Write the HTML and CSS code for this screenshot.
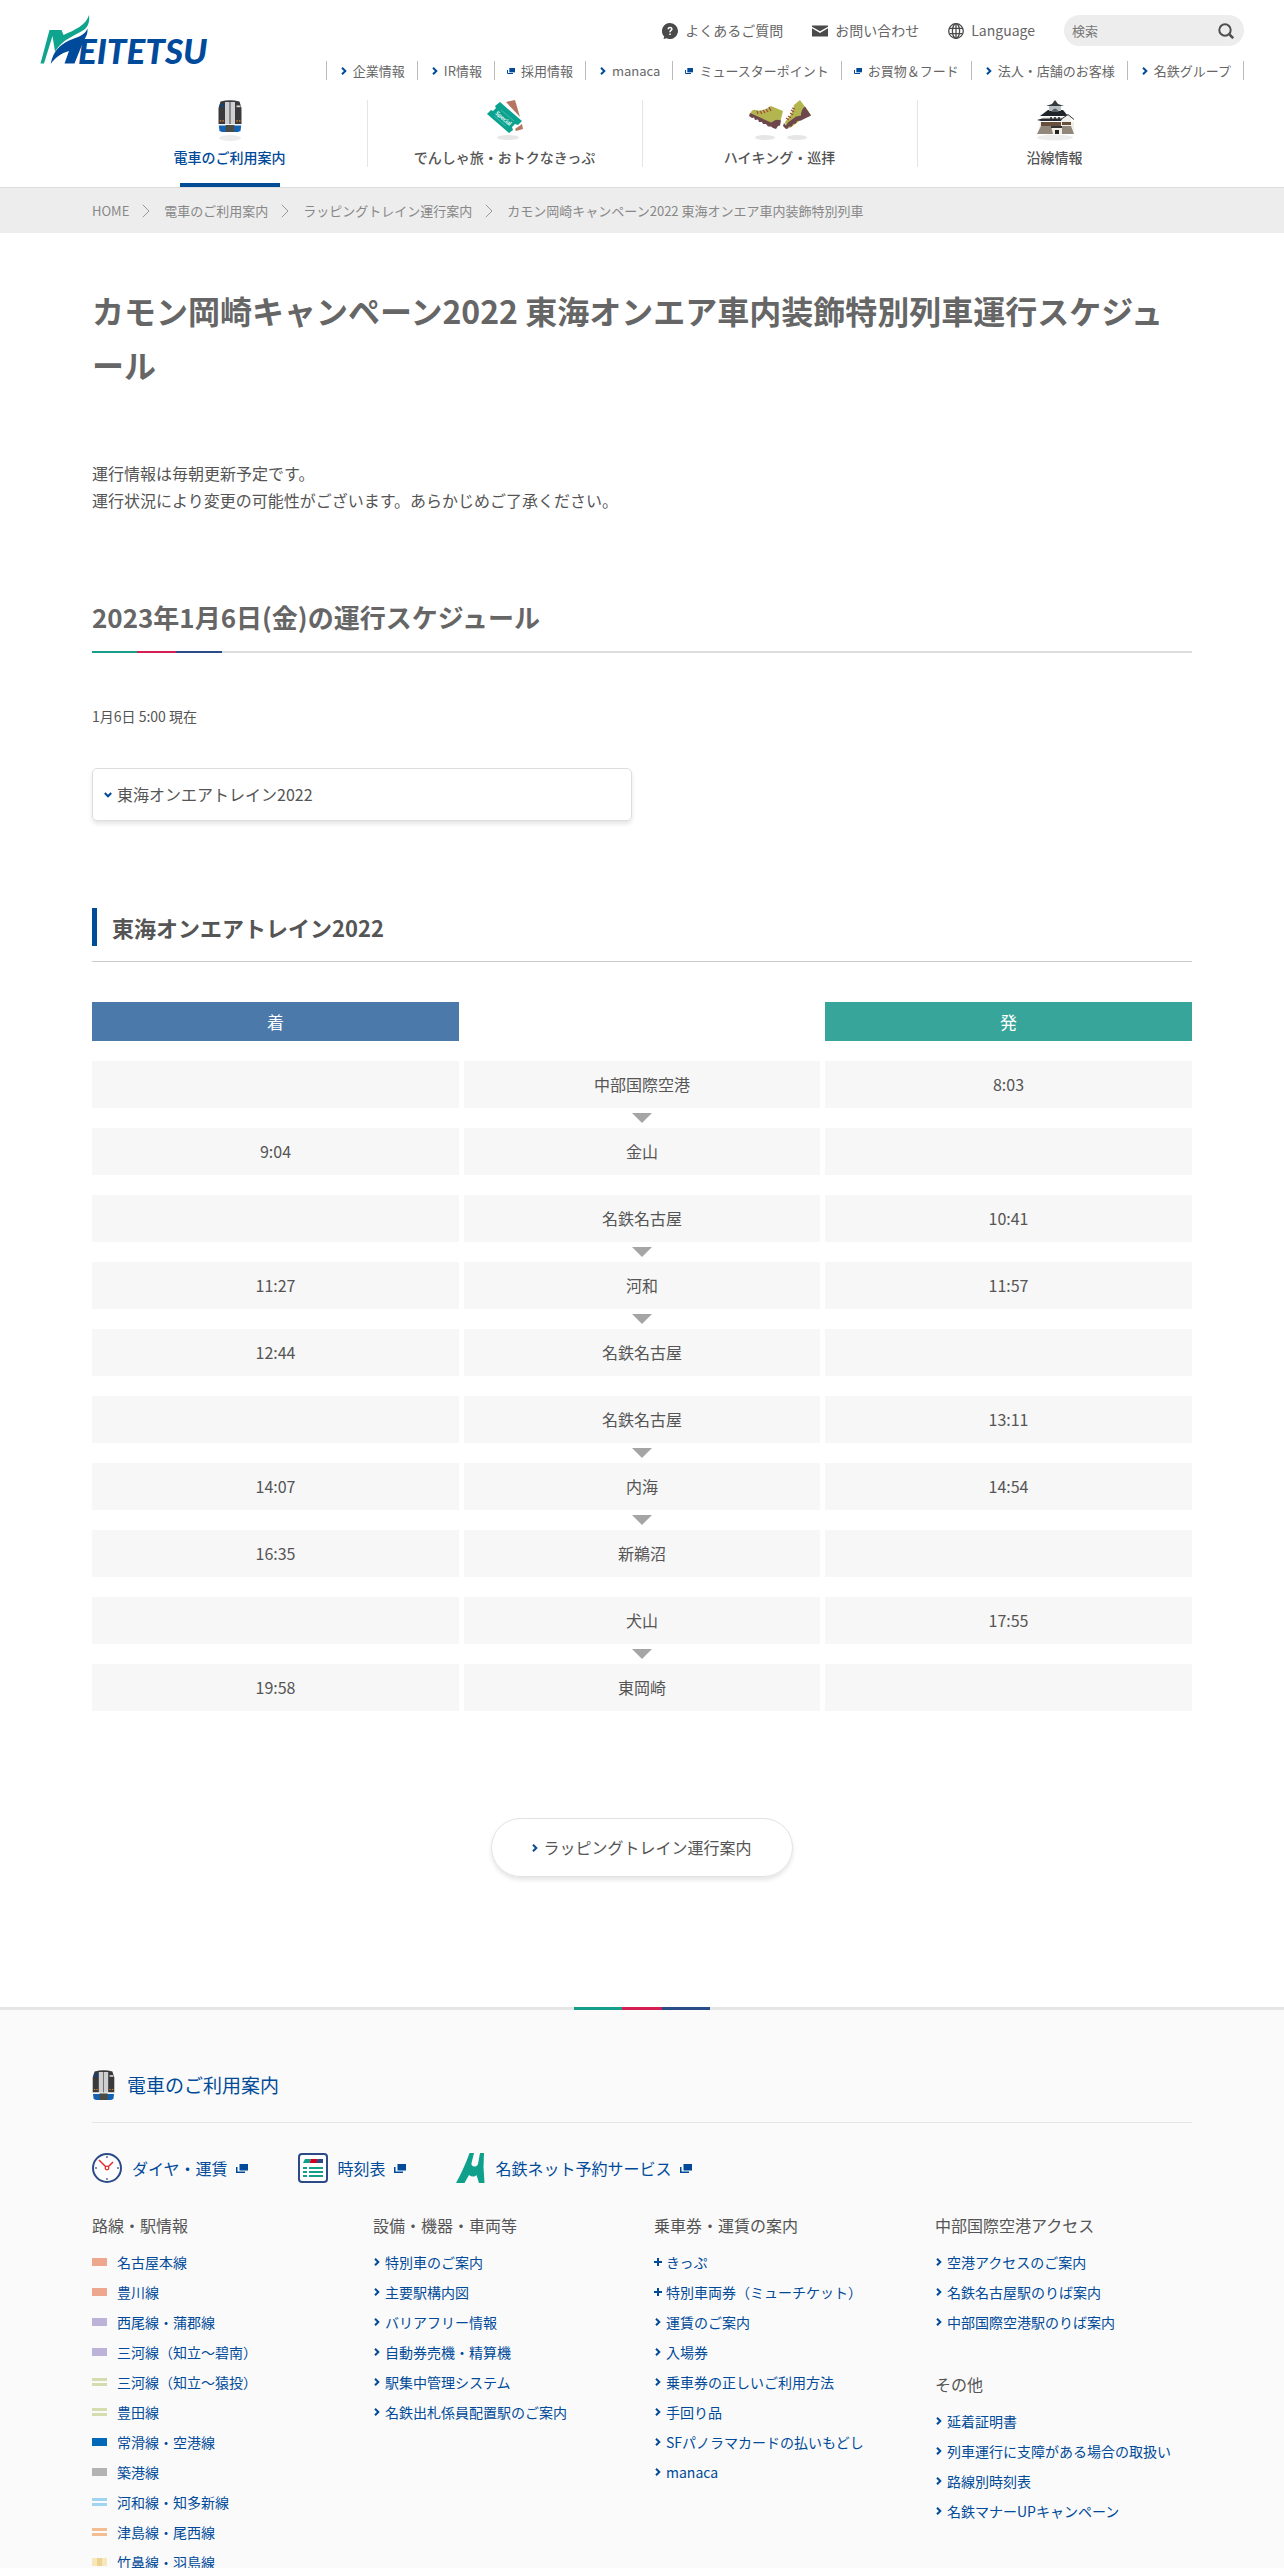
FILE: index.html
```html
<!DOCTYPE html>
<html lang="ja">
<head>
<meta charset="utf-8">
<meta name="viewport" content="width=device-width, initial-scale=1">
<title>カモン岡崎キャンペーン2022 東海オンエア車内装飾特別列車運行スケジュール</title>
<link rel="stylesheet" href="styles.css">
</head>
<body>
<svg class="sprite" aria-hidden="true">
  <symbol id="chevron" viewBox="0 0 6 8"><path d="M1 .8 4.3 4 1 7.2" fill="none" stroke="currentColor" stroke-width="2"/></symbol>
  <symbol id="angle" viewBox="0 0 8 14"><path d="M.8 .8 7 7 .8 13.2" fill="none" stroke="currentColor" stroke-width="1"/></symbol>
  <symbol id="plus" viewBox="0 0 8 8"><path d="M4 0v8M0 4h8" fill="none" stroke="currentColor" stroke-width="2"/></symbol>
  <symbol id="external" viewBox="0 0 12 9"><path d="M3.5 0H12v6.500H3.500z" fill="currentColor"/><path d="M.75 3v5.250H9" fill="none" stroke="currentColor" stroke-width="1.5"/></symbol>
  <symbol id="train" viewBox="0 0 24 32">
    <path d="M2.500 1.500Q12-1.200 21.500 1.500L23.500 8v16H.5V8z" fill="#3a3a3c"/>
    <path d="M1.700 4.500 6.500 3.500v3.500H1.300z" fill="#17406f"/>
    <path d="M7 2h4.600v22.500H7zM12.400 2H17v22.500h-4.600z" fill="#cfcfd1"/>
    <path d="M11.600 2h.8v22.500h-.8z" fill="#77777a"/>
    <path d="M18.500 5.500h4v1.700h-4z" fill="#d8d8d8"/>
    <path d="M1.800 20.200h1.400v1.200H1.800zm2.600 0h1.400v1.200H4.400zm14 0h1.400v1.200h-1.400zm2.600 0h1.400v1.200H21z" fill="#d98a2b"/>
    <path d="M.5 24h23v1.200H.5z" fill="#f4f4f4"/>
    <path d="M.8 25.500h22.400l-.7 5.500-2.500 1H4l-2.500-1z" fill="#1262b3"/>
    <path d="M7.700 25h8.600v7H7.700z" fill="#4b4b46"/>
  </symbol>
</svg>

<header class="header">
  <div class="header-top">
    <a class="logo" href="#" aria-label="MEITETSU">
      <svg width="176" height="64" viewBox="0 0 176 64">
        <path d="M.5 48.500 9.500 15h12l2 5C35 15 46 10 49 0c1 7-1 13-7 16-8 5-19 8-27 20.500L12.500 21 4 48.500z" fill="#0fa48d"/>
        <path d="M10.700 49C13 36 20 30 29 25.500 38 22 45 20 47.500 13.500 48 20 45 23 43.500 26L34.500 48.500H24.500L29 36C21 38 15 43 10.700 49z" fill="#004a9b"/>
        <text class="logo-text" x="38" y="49">EITETSU</text>
      </svg>
    </a>
    <div class="header-links">
      <div class="utility">
        <a class="utility-link" href="#">
          <svg width="16" height="16" viewBox="0 0 16 16"><path d="M8 0a8 8 0 1 1-3.300 15.300L1.500 16l.7-2.500A8 8 0 0 1 8 0z" fill="#4a4a4a"/><path d="M6.200 6.300c0-2.400 3.700-2.400 3.700-.2C9.900 7.500 8 7.400 8 9.200M8 10.400v1.500" fill="none" stroke="#fff" stroke-width="1.500"/></svg>
          よくあるご質問</a>
        <a class="utility-link" href="#">
          <svg width="16" height="16" viewBox="0 0 16 16"><path d="M0 2.500h16v1.200L8 8.200 0 3.700zM0 5.300 8 10l8-4.700V13.500H0z" fill="#4a4a4a"/></svg>
          お問い合わせ</a>
        <a class="utility-link" href="#">
          <svg width="16" height="16" viewBox="0 0 16 16" fill="none" stroke="#4a4a4a" stroke-width="1.300"><circle cx="8" cy="8" r="7.300"/><ellipse cx="8" cy="8" rx="3.600" ry="7.300"/><path d="M8 .7v14.600M1.500 5.300h13M1.500 10.700h13"/></svg>
          Language</a>
        <form class="search" role="search">
          <input class="search-input" type="text" placeholder="検索" aria-label="検索">
          <button class="search-button" type="button" aria-label="検索する">
            <svg width="16" height="16" viewBox="0 0 16 16" fill="none" stroke="#4f4f4f" stroke-width="2"><circle cx="7" cy="7" r="5.700"/><path d="m11.500 11.500 3.700 3.700" stroke-width="2.500"/></svg>
          </button>
        </form>
      </div>
      <nav class="sites" aria-label="関連サイト">
        <a class="site" href="#"><svg class="chevron"><use href="#chevron"/></svg>企業情報</a>
        <a class="site" href="#"><svg class="chevron"><use href="#chevron"/></svg>IR情報</a>
        <a class="site site-external" href="#"><svg class="external-small"><use href="#external"/></svg>採用情報</a>
        <a class="site" href="#"><svg class="chevron"><use href="#chevron"/></svg>manaca</a>
        <a class="site site-external" href="#"><svg class="external-small"><use href="#external"/></svg>ミュースターポイント</a>
        <a class="site site-external" href="#"><svg class="external-small"><use href="#external"/></svg>お買物＆フード</a>
        <a class="site" href="#"><svg class="chevron"><use href="#chevron"/></svg>法人・店舗のお客様</a>
        <a class="site" href="#"><svg class="chevron"><use href="#chevron"/></svg>名鉄グループ</a>
      </nav>
    </div>
  </div>
  <nav class="global-nav container" aria-label="メインメニュー">
    <a class="nav-item is-current" href="#">
      <svg class="nav-icon" width="64" height="42" viewBox="0 0 64 42"><ellipse cx="32" cy="38" rx="11" ry="3" fill="#ececec"/><use href="#train" x="20" y="0" width="24" height="32"/></svg>
      <span class="nav-label">電車のご利用案内</span>
    </a>
    <a class="nav-item" href="#">
      <svg class="nav-icon" width="64" height="42" viewBox="0 0 64 42"><ellipse cx="35" cy="37.500" rx="11" ry="2.500" fill="#e6e6e6"/><path d="m33 2 9-2 5 17zM49 24l1 5-7 2-1-2z" fill="#b47662"/><path d="m14 14 4-4 2 1 3-3-1-2 5-4 22 19-4 4-3-1-3 3 1 3-4 3z" fill="#0aa28f"/><text class="ticket-text" transform="translate(22 14) rotate(40)">Special</text><path d="m21 16 12 10M28 10l13 11" stroke="#6fcabd" stroke-width=".6"/></svg>
      <span class="nav-label">でんしゃ旅・おトクなきっぷ</span>
    </a>
    <a class="nav-item" href="#">
      <svg class="nav-icon" width="64" height="42" viewBox="0 0 64 42"><g fill="#e6e6e6"><ellipse cx="17" cy="37.500" rx="10" ry="2.500"/><ellipse cx="49" cy="37.500" rx="10" ry="2.500"/></g>
        <path d="M2 14Q4 9 8 10q7 2 15-4l12 5-3 12-5 3-13-7z" fill="#b3b64e"/>
        <path d="m2 13-1 3 3 2 2-.5 1 2.500 3-.5 1 2.500 3 0 1 2 3 0 2 2.500 3 0 2 1.500 3 1 2-3 2-.5 1-5q-5-2-8 1l-2 1z" fill="#6d474b"/>
        <path d="m9 11 1 3m2-3 2 3m1-4 2 3m1-4 2 3m1-5 2 4" stroke="#a04c40" stroke-width="1.300"/>
        <path d="M46 5q-1 9-9 17l1 4 4 2 12-9 9-4L52 0z" fill="#b3b64e"/>
        <path d="m36 23-1 3 3 3 2-.5 1-2 3 0 1-2.500 3-.5 1-2.500 4-.5 10-5-6-9q-3 2-4 7l0 2-5 1-8 6-2 3z" fill="#6d474b"/>
        <path d="m44 8 3 1m-4 1 3 2m-4 1 3 2m-5 1 3 2m-5 0 3 2" stroke="#a04c40" stroke-width="1.300"/></svg>
      <span class="nav-label">ハイキング・巡拝</span>
    </a>
    <a class="nav-item" href="#">
      <svg class="nav-icon" width="64" height="42" viewBox="0 0 64 42"><ellipse cx="32" cy="37.500" rx="18" ry="3" fill="#ececec"/><path d="M17 22h34v12H15z" fill="#f1eee8"/><path d="M18 26h10l2 8H14zM39 26h9l3 8H39z" fill="#91877b"/><path d="M18 22h20v4H18zm21 0h9v3h-9z" fill="#66503c"/><path d="M28 26h11v2H28z" fill="#333"/><path d="M20 17h24v4H20z" fill="#eceae6"/><path d="m14 20 5-1.500h20l2 2.500H18z" fill="#272b2f"/><path d="m17 16 8-6h15l5 6z" fill="#20252a"/><path d="M26 6h12v5H26z" fill="#b9bec1"/><path d="m23 6 6-2 3-4 3 4 6 2z" fill="#34393d"/><path d="M28 12q4-7 8 0z" fill="#596066"/><path d="m38 20 7-5 6 4-3 0v3H39z" fill="#f1efeb"/><path d="m37 20 8-5.500 6 5" fill="none" stroke="#34393d"/><path d="M32 30h4v4h-4z" fill="#222"/><path d="M27 18h2m2 0h2m2 0h2" stroke="#222" stroke-width="1.500"/></svg>
      <span class="nav-label">沿線情報</span>
    </a>
  </nav>
</header>

<nav class="breadcrumb" aria-label="パンくずリスト">
  <ol class="breadcrumb-list container">
    <li><a href="#">HOME</a></li>
    <li><svg class="angle"><use href="#angle"/></svg><a href="#">電車のご利用案内</a></li>
    <li><svg class="angle"><use href="#angle"/></svg><a href="#">ラッピングトレイン運行案内</a></li>
    <li><svg class="angle"><use href="#angle"/></svg><span>カモン岡崎キャンペーン2022 東海オンエア車内装飾特別列車</span></li>
  </ol>
</nav>

<main class="main container">
  <h1 class="page-title">カモン岡崎キャンペーン2022 東海オンエア車内装飾特別列車運行スケジュール</h1>
  <p class="lead">運行情報は毎朝更新予定です。<br>運行状況により変更の可能性がございます。あらかじめご了承ください。</p>
  <h2 class="section-title">2023年1月6日(金)の運行スケジュール</h2>
  <p class="as-of">1月6日 5:00 現在</p>
  <a class="anchor-link" href="#train2022"><svg class="chevron chevron-down"><use href="#chevron"/></svg>東海オンエアトレイン2022</a>
  <h3 class="sub-title" id="train2022"><span class="sub-title-text">東海オンエアトレイン2022</span></h3>
  <div class="schedule-wrap">
    <table class="schedule">
      <thead>
        <tr><th class="arrive" scope="col">着</th><td class="blank"></td><th class="depart" scope="col">発</th></tr>
      </thead>
      <tbody>
        <tr class="runs-on"><td></td><td>中部国際空港</td><td>8:03</td></tr>
        <tr><td>9:04</td><td>金山</td><td></td></tr>
        <tr class="runs-on"><td></td><td>名鉄名古屋</td><td>10:41</td></tr>
        <tr class="runs-on"><td>11:27</td><td>河和</td><td>11:57</td></tr>
        <tr><td>12:44</td><td>名鉄名古屋</td><td></td></tr>
        <tr class="runs-on"><td></td><td>名鉄名古屋</td><td>13:11</td></tr>
        <tr class="runs-on"><td>14:07</td><td>内海</td><td>14:54</td></tr>
        <tr><td>16:35</td><td>新鵜沼</td><td></td></tr>
        <tr class="runs-on"><td></td><td>犬山</td><td>17:55</td></tr>
        <tr><td>19:58</td><td>東岡崎</td><td></td></tr>
      </tbody>
    </table>
  </div>
  <a class="pill-link" href="#"><svg class="chevron"><use href="#chevron"/></svg>ラッピングトレイン運行案内</a>
</main>

<footer class="footer">
  <div class="container">
    <h2 class="footer-title"><a href="#"><svg width="23" height="30"><use href="#train"/></svg>電車のご利用案内</a></h2>
    <div class="services">
      <a class="service" href="#">
        <svg width="30" height="30" viewBox="0 0 30 30" fill="none"><circle cx="15" cy="15" r="14" fill="#fff" stroke="#2b4a86" stroke-width="2"/><path d="M15 3v2M15 25v2M3 15h2M25 15h2" stroke="#7d93bd" stroke-width="2"/><path d="m7 7 8 8 6-6" stroke="#e02d2d" stroke-width="1.500"/><circle cx="15" cy="15" r="1.800" fill="#fff" stroke="#e02d2d" stroke-width="1.300"/></svg>
        ダイヤ・運賃<svg class="external"><use href="#external"/></svg></a>
      <a class="service" href="#">
        <svg width="30" height="30" viewBox="0 0 30 30"><rect x="1" y="1" width="28" height="28" rx="3" fill="#fff" stroke="#2b4a86" stroke-width="2"/><path d="M7 6h6l-1.500 4H5z" fill="#12a08d"/><path d="M13 6h6.500v4H11.500z" fill="#d3001f"/><path d="M19.500 6H25v4h-6.500z" fill="#2b4a86"/><path d="M5 15h4m2 0h14M5 19h4m2 0h14M5 23h4m2 0h14" stroke="#12a08d" stroke-width="2"/></svg>
        時刻表<svg class="external"><use href="#external"/></svg></a>
      <a class="service" href="#">
        <svg width="30" height="30" viewBox="0 0 30 30"><path d="M13.500 0H18L15.500 10c-1 4 5 5 6.500 1L24 0h4l-.5 14 1 16H23l-2.500-8c-2 2-5 2-7.500 0L8.500 30H0C5 21 10 10 13.500 0z" fill="#0fa08c"/></svg>
        名鉄ネット予約サービス<svg class="external"><use href="#external"/></svg></a>
    </div>
    <div class="sitemap">
      <section>
        <h3 class="sitemap-title">路線・駅情報</h3>
        <ul class="link-list lines">
          <li><a href="#"><span class="swatch salmon"></span>名古屋本線</a></li>
          <li><a href="#"><span class="swatch salmon"></span>豊川線</a></li>
          <li><a href="#"><span class="swatch lilac"></span>西尾線・蒲郡線</a></li>
          <li><a href="#"><span class="swatch lilac"></span>三河線（知立〜碧南）</a></li>
          <li><a href="#"><span class="swatch double olive"></span>三河線（知立〜猿投）</a></li>
          <li><a href="#"><span class="swatch double olive"></span>豊田線</a></li>
          <li><a href="#"><span class="swatch blue"></span>常滑線・空港線</a></li>
          <li><a href="#"><span class="swatch gray"></span>築港線</a></li>
          <li><a href="#"><span class="swatch double sky"></span>河和線・知多新線</a></li>
          <li><a href="#"><span class="swatch double orange"></span>津島線・尾西線</a></li>
          <li><a href="#"><span class="swatch sand"></span>竹鼻線・羽島線</a></li>
        </ul>
      </section>
      <section>
        <h3 class="sitemap-title">設備・機器・車両等</h3>
        <ul class="link-list">
          <li><a href="#"><svg class="mark"><use href="#chevron"/></svg>特別車のご案内</a></li>
          <li><a href="#"><svg class="mark"><use href="#chevron"/></svg>主要駅構内図</a></li>
          <li><a href="#"><svg class="mark"><use href="#chevron"/></svg>バリアフリー情報</a></li>
          <li><a href="#"><svg class="mark"><use href="#chevron"/></svg>自動券売機・精算機</a></li>
          <li><a href="#"><svg class="mark"><use href="#chevron"/></svg>駅集中管理システム</a></li>
          <li><a href="#"><svg class="mark"><use href="#chevron"/></svg>名鉄出札係員配置駅のご案内</a></li>
        </ul>
      </section>
      <section>
        <h3 class="sitemap-title">乗車券・運賃の案内</h3>
        <ul class="link-list">
          <li><a href="#"><svg class="mark"><use href="#plus"/></svg>きっぷ</a></li>
          <li><a href="#"><svg class="mark"><use href="#plus"/></svg>特別車両券（ミューチケット）</a></li>
          <li><a href="#"><svg class="mark"><use href="#chevron"/></svg>運賃のご案内</a></li>
          <li><a href="#"><svg class="mark"><use href="#chevron"/></svg>入場券</a></li>
          <li><a href="#"><svg class="mark"><use href="#chevron"/></svg>乗車券の正しいご利用方法</a></li>
          <li><a href="#"><svg class="mark"><use href="#chevron"/></svg>手回り品</a></li>
          <li><a href="#"><svg class="mark"><use href="#chevron"/></svg>SFパノラマカードの払いもどし</a></li>
          <li><a href="#"><svg class="mark"><use href="#chevron"/></svg>manaca</a></li>
        </ul>
      </section>
      <div class="sitemap-stack">
        <section>
          <h3 class="sitemap-title">中部国際空港アクセス</h3>
          <ul class="link-list">
            <li><a href="#"><svg class="mark"><use href="#chevron"/></svg>空港アクセスのご案内</a></li>
            <li><a href="#"><svg class="mark"><use href="#chevron"/></svg>名鉄名古屋駅のりば案内</a></li>
            <li><a href="#"><svg class="mark"><use href="#chevron"/></svg>中部国際空港駅のりば案内</a></li>
          </ul>
        </section>
        <section>
          <h3 class="sitemap-title">その他</h3>
          <ul class="link-list">
            <li><a href="#"><svg class="mark"><use href="#chevron"/></svg>延着証明書</a></li>
            <li><a href="#"><svg class="mark"><use href="#chevron"/></svg>列車運行に支障がある場合の取扱い</a></li>
            <li><a href="#"><svg class="mark"><use href="#chevron"/></svg>路線別時刻表</a></li>
            <li><a href="#"><svg class="mark"><use href="#chevron"/></svg>名鉄マナーUPキャンペーン</a></li>
          </ul>
        </section>
      </div>
    </div>
  </div>
</footer>
</body>
</html>
```
FILE: styles.css
```css
:root {
  --text: #555;
  --blue: #004a99;
  --teal: #159f8b;
  --red: #d51f52;
  --navy: #2b4d87;
  --rule: #ddd;
  --tricolor: linear-gradient(to right, var(--teal) 35%, var(--red) 35% 65%, var(--navy) 65%);
}

*, *::before, *::after { box-sizing: border-box; }

body {
  margin: 0;
  background: #fff;
  color: var(--text);
  font-family: "Noto Sans CJK JP", sans-serif;
  font-size: 16px;
  line-height: 27px;
}

h1, h2, h3, p, ul, ol { margin: 0; padding: 0; }
ul, ol { list-style: none; }
a { color: inherit; text-decoration: none; }
svg { flex: none; }

.sprite { display: none; }
.container { width: 100%; max-width: 1132px; margin: 0 auto; padding: 0 16px; }

.chevron { width: 6px; height: 8px; color: var(--blue); }
.chevron-down { transform: rotate(90deg); }
.external { width: 12px; height: 9px; }
.external-small { width: 8px; height: 6px; color: var(--blue); }
.angle { width: 8px; height: 14px; color: #999; }

/* Header */
.header-top { display: flex; justify-content: space-between; padding: 15px 40px 0; }
.logo { height: 64px; margin-bottom: -14px; }
.logo svg { display: block; overflow: visible; }
.logo-text { fill: #004a9b; font: italic 900 35px Lato, sans-serif; }
.ticket-text { fill: #fff; font: bold 6px Lato, sans-serif; }
.utility { display: flex; justify-content: flex-end; align-items: center; gap: 29px; height: 31px; font-size: 14px; color: #666; }
.utility-link { display: flex; align-items: center; gap: 7px; }
.search { display: flex; align-items: center; width: 180px; height: 31px; padding: 0 10px 0 8px; border-radius: 16px; background: #ededed; }
.search-input { flex: 1; min-width: 0; padding: 0; border: 0; outline: 0; background: none; color: var(--text); font: inherit; font-size: 13px; }
.search-input::placeholder { color: #777; }
.search-button { display: flex; padding: 0; border: 0; background: none; }
.sites { display: flex; justify-content: flex-end; margin-top: 15px; font-size: 13px; line-height: 19px; color: #666; }
.site { display: flex; align-items: center; gap: 6px; padding: 0 12px 0 14px; border-left: 1px solid #bbb; }
.site-external { padding-left: 12px; }
.site:last-child { border-right: 1px solid #bbb; }

.global-nav { display: grid; grid-template-columns: repeat(4, 1fr); margin-top: 20px; }
.nav-item { position: relative; display: flex; flex-direction: column; align-items: center; height: 87px; font-size: 14px; font-weight: 500; }
.nav-item + .nav-item::before { content: ""; position: absolute; left: 0; top: 0; height: 67px; border-left: 1px solid #e5e5e5; }
.nav-label { margin-top: 2px; }
.is-current { color: var(--blue); }
.is-current::after { content: ""; position: absolute; bottom: 0; width: 100px; height: 4px; background: #004c97; }

.breadcrumb { padding: 10px 0; border-top: 1px solid var(--rule); background: #ededed; color: #888; font-size: 13px; line-height: 25px; }
.breadcrumb-list { display: flex; flex-wrap: wrap; }
.breadcrumb-list li { display: flex; align-items: center; }
.angle { margin: 0 14px 0 13px; }

/* Main */
.page-title { padding-top: 50px; color: #666; font-size: 32px; line-height: 54px; }
.lead { margin-top: 69px; }
.section-title { position: relative; margin-top: 81px; padding-bottom: 12px; border-bottom: 2px solid var(--rule); color: #666; font-size: 26px; line-height: 44px; }
.section-title::after { content: ""; position: absolute; left: 0; bottom: -2px; width: 130px; height: 2px; background: var(--tricolor); }
.as-of { margin-top: 50px; font-size: 14px; }
.anchor-link { display: flex; align-items: center; gap: 6px; width: calc(50% - 10px); height: 53px; margin-top: 38px; padding: 0 12px; border: 1px solid var(--rule); border-radius: 5px; box-shadow: 0 3px 4px rgb(0 0 0 / 10%); }
.sub-title { margin-top: 87px; padding-bottom: 15px; border-bottom: 1px solid #ccc; }
.sub-title-text { display: block; padding-left: 15px; border-left: 5px solid #004c97; font-size: 22px; line-height: 38px; }

.schedule-wrap { margin: 20px -5px 0; }
.schedule { width: 100%; border-spacing: 5px 20px; table-layout: fixed; text-align: center; }
.schedule th, .schedule td { padding: 6px 0; width: 367px; font-weight: 400; }
.schedule th { color: #fff; font-size: 17px; }
.schedule td:nth-child(2) { position: relative; width: auto; }
.schedule tbody td { height: 47px; background: #f7f7f7; }
.arrive { background: #4b79aa; }
.depart { background: #37a599; }
.runs-on td:nth-child(2)::after { content: ""; position: absolute; left: calc(50% - 10px); top: calc(100% + 5px); border: 10px solid transparent; border-top-color: #a5a5a5; border-bottom: 0; }

.pill-link { display: flex; align-items: center; justify-content: center; gap: 5px; width: 302px; height: 59px; margin: 87px auto 130px; border: 1px solid #e2e2e2; border-radius: 30px; box-shadow: 0 3px 4px rgb(0 0 0 / 10%); }

/* Footer */
.footer { position: relative; border-top: 3px solid #e6e6e6; background: #fafafa; }
.footer::before { content: ""; position: absolute; left: calc(50% - 68px); top: -3px; width: 136px; height: 3px; background: var(--tricolor); }
.footer a { color: var(--blue); }
.footer-title { padding: 59px 0 21px; border-bottom: 1px solid #e5e5e5; font-size: 19px; font-weight: 400; line-height: 32px; }
.footer-title a { display: flex; align-items: center; gap: 12px; }
.services { display: flex; gap: 50px; padding-top: 30px; }
.service { display: flex; align-items: center; gap: 10px; }
.service .external { margin-left: -2px; }
.sitemap { display: grid; grid-template-columns: repeat(4, 1fr); gap: 24px; padding-top: 28px; }
.sitemap-title { font-size: 16px; font-weight: 400; line-height: 28px; }
.link-list { display: grid; gap: 8px; padding-top: 12px; font-size: 14px; line-height: 22px; white-space: nowrap; }
.link-list a { display: flex; align-items: center; gap: 4px; }
.lines a { gap: 10px; }
.sitemap-stack { display: grid; gap: 37px; align-content: start; }
.mark { width: 8px; height: 8px; }
.swatch { width: 15px; height: 8px; background: currentColor; }
.double { height: 8px; border: solid currentColor; border-width: 3px 0; background: none; }
.salmon { color: #eda78f; }
.lilac { color: #bdb3d8; }
.olive { color: #d5dcae; }
.blue { color: #0068b7; }
.gray { color: #b3b3b3; }
.sky { color: #a0d5f2; }
.orange { color: #f3bd93; }
.sand { background: linear-gradient(to right, #f8e6bd 33%, #eed292 33% 67%, #f8e6bd 67%); }
```
